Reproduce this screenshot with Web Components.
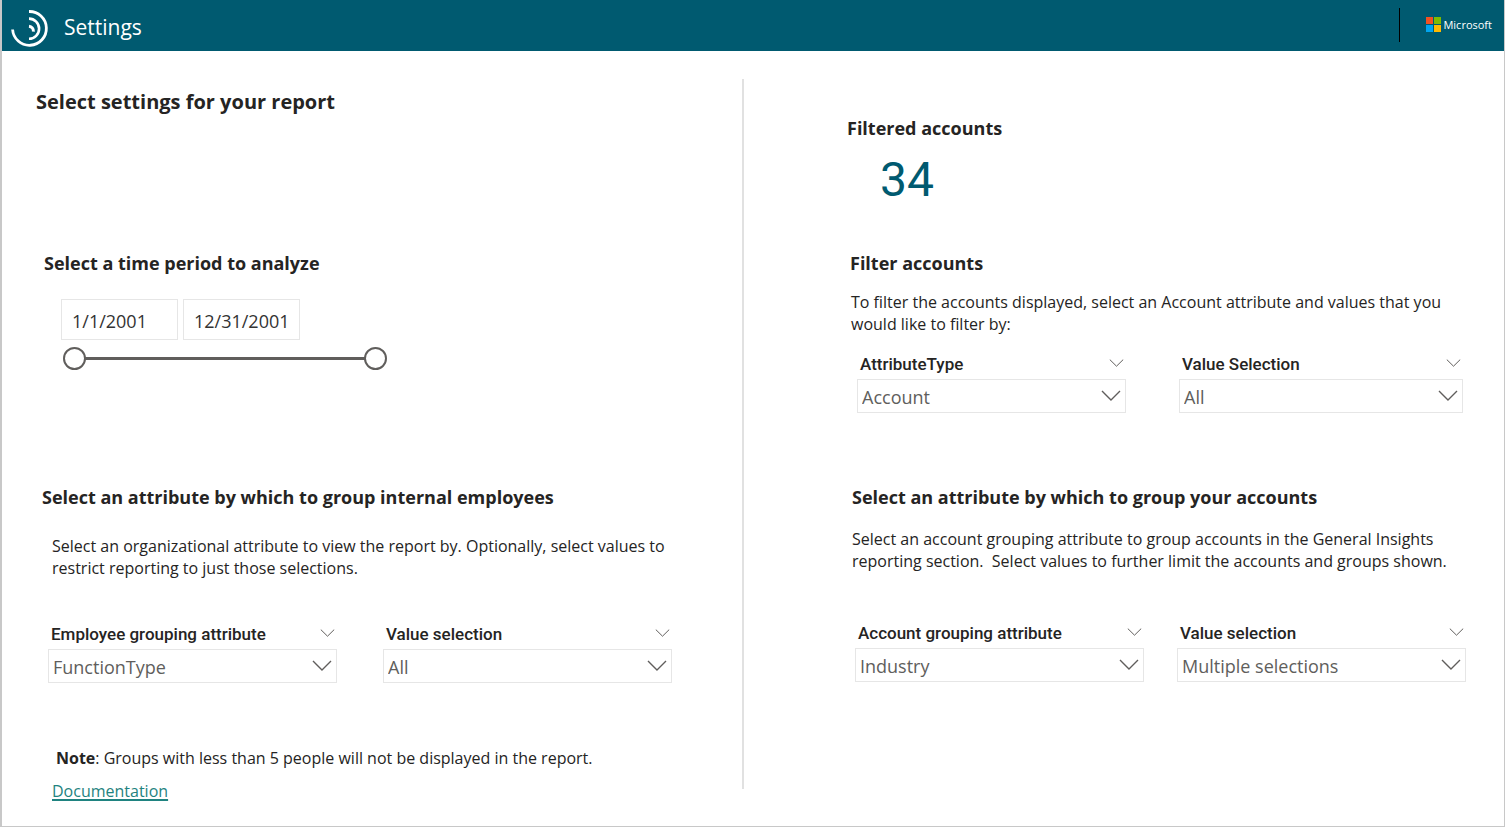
<!DOCTYPE html>
<html lang="en">
<head>
<meta charset="utf-8">
<meta name="viewport" content="width=device-width, initial-scale=1">
<title>Settings</title>
<style>
  body { margin: 0; font-family: "Open Sans", "Noto Sans", sans-serif; color: #252423; background: #fff; }
  p { margin: 0; font-size: 16px; line-height: 22px; }
</style>
</head>
<body>
<settings-page>
  <app-header slot="header">Settings</app-header>

  <report-title slot="left">Select settings for your report</report-title>
  <settings-section slot="left" class="time" heading="Select a time period to analyze">
    <date-range start="1/1/2001" end="12/31/2001"></date-range>
  </settings-section>
  <settings-section slot="left" class="employees" heading="Select an attribute by which to group internal employees">
    <p>Select an organizational attribute to view the report by. Optionally, select values to<br>restrict reporting to just those selections.</p>
    <div class="fields">
      <filter-dropdown label="Employee grouping attribute" value="FunctionType"></filter-dropdown>
      <filter-dropdown label="Value selection" value="All"></filter-dropdown>
    </div>
  </settings-section>
  <report-note slot="left"><b>Note</b>: Groups with less than 5 people will not be displayed in the report.</report-note>

  <metric-card slot="right" heading="Filtered accounts">34</metric-card>
  <settings-section slot="right" class="filter" heading="Filter accounts">
    <p>To filter the accounts displayed, select an Account attribute and values that you<br>would like to filter by:</p>
    <div class="fields">
      <filter-dropdown label="AttributeType" value="Account"></filter-dropdown>
      <filter-dropdown label="Value Selection" value="All"></filter-dropdown>
    </div>
  </settings-section>
  <settings-section slot="right" class="accounts" heading="Select an attribute by which to group your accounts">
    <p>Select an account grouping attribute to group accounts in the General Insights<br>reporting section.&nbsp; Select values to further limit the accounts and groups shown.</p>
    <div class="fields">
      <filter-dropdown label="Account grouping attribute" value="Industry"></filter-dropdown>
      <filter-dropdown label="Value selection" value="Multiple selections"></filter-dropdown>
    </div>
  </settings-section>
</settings-page>

<style>
  .fields { display: grid; }
  .time { margin: 135px 0 0 42px; }
  .time date-range { margin: 24px 0 0 17px; }
  .employees { margin: 115px 70px 0 40px; }
  .employees p { margin: 26px 0 0 10px; }
  .employees .fields { grid-template-columns: 1fr 1fr; gap: 46px; margin: 42px 0 0 6px; }
  report-note { margin: 64px 0 24px 50px; }
  metric-card { margin: 29px 0 0 103px; }
  .filter { margin: 43px 41px 0 106px; }
  .filter p { margin: 16px 0 0 1px; }
  .filter .fields { grid-template-columns: 269fr 284fr; gap: 53px; margin: 16px 0 0 7px; }
  .accounts { margin: 72px 38px 0 108px; }
  .accounts p { margin: 19px 0 0; }
  .accounts .fields { grid-template-columns: 1fr 1fr; gap: 33px; margin: 48px 0 0 3px; }
</style>

<script>
  class BaseElement extends HTMLElement {
    constructor() {
      super();
      this.attachShadow({ mode: "open" });
    }
    connectedCallback() {
      if (!this.shadowRoot.hasChildNodes()) this.shadowRoot.innerHTML = this.render();
    }
    attr(name) { return this.getAttribute(name) || ""; }
  }

  customElements.define("settings-page", class extends BaseElement {
    render() {
      return `
        <style>
          :host { display: flex; flex-direction: column; min-height: 100vh; box-sizing: border-box;
                  border: solid #c8c8c8; border-width: 0 1px 1px 2px; }
          main { flex: 1; display: grid; grid-template-columns: 740fr 2px 760fr; }
          .column { display: flex; flex-direction: column; min-width: 0; padding-top: 36px; }
          .divider { background: #e1e1e1; margin: 28px 0 37px; }
        </style>
        <slot name="header"></slot>
        <main>
          <div class="column"><slot name="left"></slot></div>
          <div class="divider"></div>
          <div class="column"><slot name="right"></slot></div>
        </main>`;
    }
  });

  customElements.define("app-header", class extends BaseElement {
    render() {
      return `
        <style>
          :host { display: block; }
          header { display: flex; align-items: center; height: 51px; background: #005a70; color: #fff; }
          .mark { margin: 4px 0 0 8px; }
          h1 { margin: 2px 0 0 14px; font-size: 21px; line-height: 28px; font-weight: 400; flex: 1; }
          .rule { width: 1px; height: 34px; margin-bottom: 2px; background: #000; }
          .brand { display: flex; align-items: center; gap: 2px; margin: 0 12px 2px 26px; font-size: 11px; line-height: 16px; }
        </style>
        <header>
          <svg class="mark" width="40" height="40" viewBox="0 0 40 40" fill="none" stroke="#fff" aria-hidden="true">
            <path stroke-width="2.8" d="M19 3.5A16.9 16.9 0 1 1 2.6 21.5"/>
            <path stroke-width="2.6" d="M19 10.6A10.1 10.1 0 1 1 19 30.8"/>
            <path stroke-width="3" d="M19 18.2A5 5 0 0 1 23.4 23.6"/>
          </svg>
          <h1><slot></slot></h1>
          <div class="rule"></div>
          <div class="brand">
            <svg width="15" height="15" viewBox="0 0 15 15" aria-hidden="true">
              <path fill="#f25022" d="M0 0h7v7H0z"/><path fill="#7fba00" d="M8 0h7v7H8z"/>
              <path fill="#00a4ef" d="M0 8h7v7H0z"/><path fill="#ffb900" d="M8 8h7v7H8z"/>
            </svg>
            <span>Microsoft</span>
          </div>
        </header>`;
    }
  });

  customElements.define("report-title", class extends BaseElement {
    render() {
      return `
        <style>
          :host { display: block; margin: 1px 0 0 34px; }
          h2 { margin: 0; font-size: 20px; line-height: 28px; font-weight: 700; }
        </style>
        <h2><slot></slot></h2>`;
    }
  });

  customElements.define("settings-section", class extends BaseElement {
    render() {
      return `
        <style>
          :host { display: block; }
          h3 { margin: 0; font-size: 18px; line-height: 24px; font-weight: 700; }
        </style>
        <section><h3>${this.attr("heading")}</h3><slot></slot></section>`;
    }
  });

  customElements.define("metric-card", class extends BaseElement {
    render() {
      return `
        <style>
          :host { display: block; }
          h3 { margin: 0; font-size: 18px; line-height: 24px; font-weight: 700; }
          .value { margin: 12px 0 0 33px; font: 400 48px/56px Roboto, sans-serif; color: #005a70; }
        </style>
        <h3>${this.attr("heading")}</h3>
        <div class="value"><slot></slot></div>`;
    }
  });

  customElements.define("report-note", class extends BaseElement {
    render() {
      return `
        <style>
          :host { display: block; font-size: 16px; line-height: 22px; }
          .text { margin-left: 4px; }
          a { display: inline-block; margin-top: 11px; color: #1f8380; text-decoration-thickness: 2px; text-underline-offset: 2px; }
        </style>
        <div class="text"><slot></slot></div>
        <a href="#documentation">Documentation</a>`;
    }
  });

  customElements.define("date-range", class extends BaseElement {
    render() {
      return `
        <style>
          :host { display: block; }
          .dates { display: flex; gap: 5px; }
          .dates input { box-sizing: border-box; width: 117px; height: 41px; padding: 2px 0 0 10px;
                  border: 1px solid #e6e6e6; font: 18px "Open Sans", sans-serif; color: #333; background: #fff; }
          .slider { display: grid; width: 324px; height: 24px; margin: 6px 0 0 2px; align-items: center;
                  background: linear-gradient(#605e5c, #605e5c) center / 300px 3px no-repeat; }
          .slider input { grid-area: 1 / 1; width: 100%; height: 24px; margin: 0; appearance: none;
                  background: none; pointer-events: none; }
          .slider input::-webkit-slider-thumb { appearance: none; box-sizing: border-box; width: 23px; height: 23px;
                  border: 2px solid #605e5c; border-radius: 50%; background: #fff; pointer-events: auto; }
        </style>
        <div class="dates">
          <input type="text" aria-label="Start date" value="${this.attr("start")}">
          <input type="text" aria-label="End date" value="${this.attr("end")}">
        </div>
        <div class="slider">
          <input type="range" aria-label="Start of period" min="0" max="364" value="0">
          <input type="range" aria-label="End of period" min="0" max="364" value="364">
        </div>`;
    }
  });

  customElements.define("filter-dropdown", class extends BaseElement {
    render() {
      return `
        <style>
          :host { display: block; min-width: 0; }
          .head { display: flex; align-items: center; justify-content: space-between; height: 24px; padding: 0 2px 0 3px; }
          label { padding-top: 2px; font: 500 17px/22px Roboto, sans-serif; }
          button { display: flex; padding: 0; border: 0; background: none; }
          .box { display: grid; align-items: center; margin-top: 4px; }
          select { grid-area: 1 / 1; box-sizing: border-box; width: 100%; height: 34px; padding: 2px 36px 0 4px;
                  border: 1px solid #e6e6e6; border-radius: 0; appearance: none; background: #fff;
                  font: 18px "Open Sans", sans-serif; color: #605e5c; }
          .box svg { grid-area: 1 / 1; justify-self: end; margin-right: 5px; pointer-events: none; }
        </style>
        <div class="head">
          <label for="choice">${this.attr("label")}</label>
          <button type="button" aria-label="More options">
            <svg width="15" height="8" viewBox="0 0 15 8" fill="none" stroke="#605e5c"><path d="M.8.6 7.5 7.2 14.2.6"/></svg>
          </button>
        </div>
        <div class="box">
          <select id="choice"><option>${this.attr("value")}</option></select>
          <svg width="20" height="12" viewBox="0 0 20 12" fill="none" stroke="#605e5c" stroke-width="1.4" aria-hidden="true"><path d="M1 1 10 10 19 1"/></svg>
        </div>`;
    }
  });
</script>
</body>
</html>
